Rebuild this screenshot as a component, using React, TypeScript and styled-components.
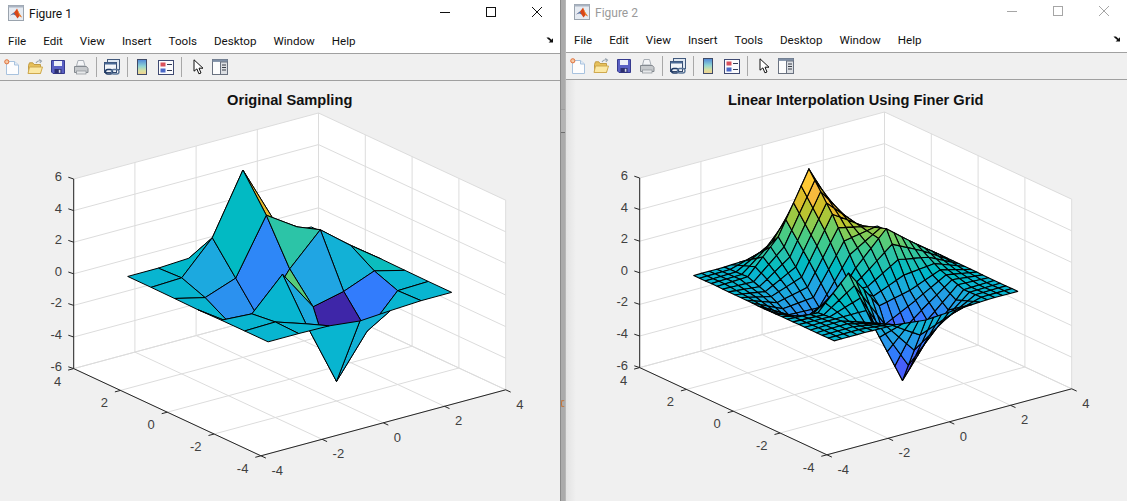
import React from "react";
import styled, { createGlobalStyle } from "styled-components";

const Global = createGlobalStyle`
  html, body { margin: 0; padding: 0; background: #f0f0f0; overflow: hidden; }
  #root { width: 1127px; height: 501px; }
`;

const Page = styled.div`
  display: flex;
  width: 1127px;
  height: 501px;
  overflow: hidden;
  font-family: Roboto, "Noto Sans", sans-serif;
`;

const Window = styled.section<{ $shift?: boolean; $w: number }>`
  display: flex;
  flex-direction: column;
  flex: none;
  width: ${(p) => p.$w}px;
  height: ${(p) => (p.$shift ? 502 : 501)}px;
  margin-top: ${(p) => (p.$shift ? -1 : 0)}px;
  background: #f0f0f0;
`;

const TitleBar = styled.header`
  display: flex;
  align-items: center;
  height: 26px;
  flex: none;
  background: #fff;
  padding-left: 8px;
`;

const TitleText = styled.span<{ $inactive?: boolean }>`
  margin: 1px 0 0 5px;
  font-size: 12px;
  line-height: 26px;
  color: ${(p) => (p.$inactive ? "#9a9a9a" : "#111")};
`;

const Controls = styled.div`
  display: flex;
  margin-left: auto;
  height: 26px;
`;

const Control = styled.span<{ $inactive?: boolean }>`
  display: flex;
  align-items: center;
  justify-content: center;
  width: 46px;
  height: 24px;
  color: ${(p) => (p.$inactive ? "#a6a6a6" : "#111")};
`;

const MenuBar = styled.nav`
  display: flex;
  align-items: center;
  gap: 17px;
  height: 27px;
  flex: none;
  padding: 0 6px 0 8px;
  background: #fff;
  border-bottom: 1px solid #a0a0a0;
  font-size: 11.6px;
  color: #111;
  box-sizing: content-box;
`;

const MenuItem = styled.span`
  line-height: 27px;
  margin-top: 3px;
`;

const DockArrow = styled.span`
  margin-left: auto;
  display: flex;
  margin-top: 1px;
`;

const ToolBar = styled.div`
  display: flex;
  align-items: center;
  height: 26px;
  flex: none;
  background: #f0f0f0;
  border-bottom: 1px solid #a0a0a0;
`;

const ToolButton = styled.span`
  display: flex;
  align-items: center;
  justify-content: center;
  width: 23px;
  height: 26px;
  flex: none;
`;

const ToolSep = styled.span`
  flex: none;
  width: 1px;
  height: 20px;
  margin: 0 3.5px;
  background: #a8a8a8;
`;

const Canvas = styled.main<{ $shadow?: boolean }>`
  position: relative;
  flex: 1;
  min-height: 0;
  overflow: hidden;
  background: #f0f0f0;
  ${(p) =>
    p.$shadow
      ? `&::before { content: ""; position: absolute; left: 0; top: 0; bottom: 0; width: 10px;
         background: linear-gradient(90deg, #e2e2e2, #f0f0f0); }`
      : ""}
`;

const PlotSvg = styled.svg`
  display: block;
  position: relative;
`;

const Gutter = styled.div`
  position: relative;
  flex: none;
  width: 6px;
  height: 501px;
  box-sizing: border-box;
  background: #ababab;
  border-left: 1px solid #8a8a8a;
  border-right: 1px solid #b8b8b8;
`;

const GutterMark = styled.span`
  position: absolute;
  left: 0;
  top: 400px;
  width: 4px;
  height: 7px;
  box-sizing: border-box;
  border: 1px solid #c4753a;
  border-right-color: transparent;
  border-radius: 3px;
`;

const GutterBand = styled.span`
  position: absolute;
  left: 0;
  right: 0;
  top: 109px;
  height: 22px;
  background: #b4b4b4;
  border-bottom: 1px solid #6e6e6e;
  border-top: 1px solid #9c9c9c;
`;

const MENU = ["File", "Edit", "View", "Insert", "Tools", "Desktop", "Window", "Help"];

const PARULA: number[][] = [
  [0.2422, 0.1504, 0.6603], [0.2504, 0.165, 0.7076], [0.2578, 0.1818, 0.7511], [0.2647, 0.1978, 0.7952],
  [0.2706, 0.2147, 0.8364], [0.2751, 0.2342, 0.871], [0.2783, 0.2559, 0.8991], [0.2803, 0.2782, 0.9221],
  [0.2813, 0.3006, 0.9414], [0.281, 0.3228, 0.9579], [0.2795, 0.3447, 0.9717], [0.276, 0.3667, 0.9829],
  [0.2699, 0.3892, 0.9906], [0.2602, 0.4123, 0.9952], [0.244, 0.4358, 0.9988], [0.2206, 0.4603, 0.9973],
  [0.1963, 0.4847, 0.9892], [0.1834, 0.5074, 0.9798], [0.1786, 0.5289, 0.9682], [0.1764, 0.5499, 0.952],
  [0.1687, 0.5703, 0.9359], [0.154, 0.5902, 0.9218], [0.146, 0.6091, 0.9079], [0.138, 0.6276, 0.8973],
  [0.1248, 0.6459, 0.8883], [0.1113, 0.6635, 0.8763], [0.0952, 0.6798, 0.8598], [0.0689, 0.6948, 0.8394],
  [0.0297, 0.7082, 0.8163], [0.0036, 0.7203, 0.7917], [0.0067, 0.7312, 0.766], [0.0433, 0.7411, 0.7394],
  [0.0964, 0.75, 0.712], [0.1408, 0.7584, 0.6842], [0.1717, 0.767, 0.6554], [0.1938, 0.7758, 0.6251],
  [0.2161, 0.7843, 0.5923], [0.247, 0.7918, 0.5567], [0.2906, 0.7973, 0.5188], [0.3406, 0.8008, 0.4789],
  [0.3909, 0.8029, 0.4354], [0.4456, 0.8024, 0.3909], [0.5044, 0.7993, 0.348], [0.5616, 0.7942, 0.3045],
  [0.6174, 0.7876, 0.2612], [0.672, 0.7793, 0.2227], [0.7242, 0.7698, 0.191], [0.7738, 0.7598, 0.1646],
  [0.8203, 0.7498, 0.1535], [0.8634, 0.7406, 0.1596], [0.9035, 0.733, 0.1774], [0.9393, 0.7288, 0.21],
  [0.9728, 0.7298, 0.2394], [0.9956, 0.7434, 0.2371], [0.997, 0.7659, 0.2199], [0.9952, 0.7893, 0.2028],
  [0.9892, 0.8136, 0.1885], [0.9786, 0.8386, 0.1766], [0.9676, 0.8639, 0.1643], [0.961, 0.889, 0.1537],
  [0.9597, 0.9135, 0.1423], [0.9628, 0.9373, 0.1265], [0.9691, 0.9606, 0.1064], [0.9769, 0.9839, 0.0805],
];

const peaks = (x: number, y: number) =>
  3 * (1 - x) ** 2 * Math.exp(-(x ** 2) - (y + 1) ** 2) -
  10 * (x / 5 - x ** 3 - y ** 5) * Math.exp(-(x ** 2) - y ** 2) -
  (1 / 3) * Math.exp(-((x + 1) ** 2) - y ** 2);

const interp = (x: number, y: number) => {
  const x0 = Math.min(Math.floor(x), 2);
  const y0 = Math.min(Math.floor(y), 2);
  const tx = x - x0;
  const ty = y - y0;
  return (
    peaks(x0, y0) * (1 - tx) * (1 - ty) +
    peaks(x0 + 1, y0) * tx * (1 - ty) +
    peaks(x0, y0 + 1) * (1 - tx) * ty +
    peaks(x0 + 1, y0 + 1) * tx * ty
  );
};

let zMin = Infinity;
let zMax = -Infinity;
for (let x = -3; x <= 3; x++)
  for (let y = -3; y <= 3; y++) {
    zMin = Math.min(zMin, peaks(x, y));
    zMax = Math.max(zMax, peaks(x, y));
  }

const colorOf = (z: number) => {
  const i = Math.max(0, Math.min(63, Math.floor(((z - zMin) / (zMax - zMin)) * 64)));
  const [r, g, b] = PARULA[i];
  return `rgb(${Math.round(r * 255)},${Math.round(g * 255)},${Math.round(b * 255)})`;
};

const proj = (x: number, y: number, z: number): [number, number] => [
  289.7 + 30.6 * x - 23.4 * y,
  284.4 - 8.25 * x - 10.9 * y - 15.8 * z,
];
const pt = (p: [number, number]) => `${p[0].toFixed(2)},${p[1].toFixed(2)}`;
const depth = (x: number, y: number, z: number) => (-0.527 * x) / 8 - (0.687 * y) / 8 + (0.5 * z) / 12;

type Face = { d: number; points: string; fill: string };
const buildFaces = (step: number): Face[] => {
  const n = Math.round(6 / step);
  const out: Face[] = [];
  for (let i = 0; i < n; i++)
    for (let j = 0; j < n; j++) {
      const x0 = -3 + i * step;
      const y0 = -3 + j * step;
      const x1 = x0 + step;
      const y1 = y0 + step;
      const corners: [number, number][] = [[x0, y0], [x1, y0], [x1, y1], [x0, y1]];
      const zs = corners.map(([a, b]) => interp(a, b));
      const d = corners.reduce((s, [a, b], k) => s + depth(a, b, zs[k]), 0) / 4;
      out.push({
        d,
        points: corners.map(([a, b], k) => pt(proj(a, b, zs[k]))).join(" "),
        fill: colorOf(zs[0]),
      });
    }
  return out.sort((p, q) => p.d - q.d);
};

const GRID = "#dcdcdc";
const AXIS = "#262626";
const LABEL = "#404040";
const xs = [-4, -2, 0, 2, 4];
const zs = [-6, -4, -2, 0, 2, 4, 6];

const seg = (a: [number, number], b: [number, number], stroke: string, w: number, key: string) => (
  <line key={key} x1={a[0]} y1={a[1]} x2={b[0]} y2={b[1]} stroke={stroke} strokeWidth={w} />
);

const Plot: React.FC<{ title: string; titleY: number; step: number; w: number; edge: number }> = ({
  title,
  titleY,
  step,
  w,
  edge,
}) => {
  const faces = React.useMemo(() => buildFaces(step), [step]);
  const wall = [
    proj(-4, 4, 6), proj(4, 4, 6), proj(4, -4, 6), proj(4, -4, -6), proj(-4, -4, -6), proj(-4, 4, -6),
  ];
  return (
    <PlotSvg width={w} height={421} viewBox={`0 81 ${w} 421`}>
      <polygon points={wall.map(pt).join(" ")} fill="#fff" />
      {xs.map((v) => seg(proj(v, -4, -6), proj(v, 4, -6), GRID, 1, `gx${v}`))}
      {xs.map((v) => seg(proj(-4, v, -6), proj(4, v, -6), GRID, 1, `gy${v}`))}
      {xs.map((v) => seg(proj(v, 4, -6), proj(v, 4, 6), GRID, 1, `wx${v}`))}
      {xs.map((v) => seg(proj(4, v, -6), proj(4, v, 6), GRID, 1, `wy${v}`))}
      {zs.map((v) => seg(proj(-4, 4, v), proj(4, 4, v), GRID, 1, `zx${v}`))}
      {zs.map((v) => seg(proj(4, 4, v), proj(4, -4, v), GRID, 1, `zy${v}`))}
      {faces.map((f, i) => (
        <polygon key={i} points={f.points} fill={f.fill} stroke="#000" strokeWidth={edge} strokeLinejoin="round" />
      ))}
      {seg(proj(-4, 4, -6), proj(-4, 4, 6), AXIS, 1, "az")}
      {seg(proj(-4, 4, -6), proj(-4, -4, -6), AXIS, 1, "ay")}
      {seg(proj(-4, -4, -6), proj(4, -4, -6), AXIS, 1, "ax")}
      {zs.map((v) => {
        const p = proj(-4, 4, v);
        return (
          <g key={`tz${v}`}>
            {seg(p, [p[0] - 5.4, p[1] - 1.8], AXIS, 1, "t")}
            <text x={62} y={p[1] + 2} textAnchor="end" fontFamily="'Liberation Sans', sans-serif" fontSize={13} fill={LABEL}>
              {v}
            </text>
          </g>
        );
      })}
      {xs.map((v) => {
        const p = proj(-4, v, -6);
        return (
          <g key={`ty${v}`}>
            {seg(p, [p[0] - 5.6, p[1] + 1.5], AXIS, 1, "t")}
            <text x={p[0] - 12.5} y={p[1] + 17} textAnchor="end" fontFamily="'Liberation Sans', sans-serif" fontSize={13} fill={LABEL}>
              {v}
            </text>
          </g>
        );
      })}
      {xs.map((v) => {
        const p = proj(v, -4, -6);
        return (
          <g key={`tx${v}`}>
            {seg(p, [p[0] + 5, p[1] + 2.3], AXIS, 1, "t")}
            <text x={p[0] + 10.5} y={p[1] + 18.7} fontFamily="'Liberation Sans', sans-serif" fontSize={13} fill={LABEL}>
              {v}
            </text>
          </g>
        );
      })}
      <text x={289.7} y={titleY} textAnchor="middle" fontFamily="'Liberation Sans', sans-serif" fontWeight="700" fontSize={14.65} fill="#111">
        {title}
      </text>
    </PlotSvg>
  );
};

const MatlabLogo = () => (
  <svg width="16" height="16" viewBox="0 0 16 16">
    <rect x="0.5" y="0.5" width="15" height="15" fill="#e6ebf2" stroke="#9aa3ad" />
    <rect x="0.5" y="0.5" width="15" height="2" fill="#a9b4c2" />
    <path d="M2 10.5 L6 7.5 L8 5 L9 3.5 L11 8 L14 12.5 L11.5 11 L9.5 13.5 L7.5 10.5 L5 9 Z" fill="#d8461a" />
    <path d="M2 10.5 L6 7.5 L7.5 10.5 L5.5 9.2 Z" fill="#3f7fc0" />
    <path d="M9 3.5 L11 8 L14 12.5 L11.5 11 L10 7 Z" fill="#f0912c" />
  </svg>
);

const Minimize = () => (
  <svg width="10" height="10" viewBox="0 0 10 10"><path d="M0 5.5H10" stroke="currentColor" /></svg>
);
const Maximize = () => (
  <svg width="10" height="10" viewBox="0 0 10 10"><rect x="0.5" y="0.5" width="9" height="9" fill="none" stroke="currentColor" /></svg>
);
const Close = () => (
  <svg width="10" height="10" viewBox="0 0 10 10"><path d="M0 0L10 10M10 0L0 10" stroke="currentColor" strokeWidth="1" /></svg>
);
const Arrow = () => (
  <svg width="8" height="6" viewBox="0 0 8 6"><path d="M0.5 0.5L3 0.5L5.5 2.7L7 1.2V5.5H2.6L4.2 4L1.6 1.8Z" fill="#111" /></svg>
);

const NewIcon = () => (
  <svg width="16" height="17" viewBox="0 0 16 17">
    <path d="M2.5 2.5H10.5L14.5 6V15.5H2.5Z" fill="#fdfdfe" stroke="#a8c2de" />
    <path d="M10.5 2.5V6H14.5" fill="#e2ecf6" stroke="#a8c2de" />
    <circle cx="2.8" cy="2.8" r="2.1" fill="#f6c9a4" stroke="#e0703a" strokeWidth="1" />
  </svg>
);
const OpenIcon = () => (
  <svg width="16" height="16" viewBox="0 0 16 16">
    <path d="M1.5 6.5V14.5H13.5V5.5H7L5.8 3.8H2.5Z" fill="#e6c05a" stroke="#c29c44" />
    <path d="M1 14.5L2.5 8H15.5L13.5 14.5Z" fill="#fbe8a4" stroke="#cfa94f" />
    <path d="M9 4C10 2 11.5 1.5 13.5 1.8M12.3 0.5L14.5 2L12.8 4" fill="none" stroke="#96a2ae" strokeWidth="1.1" />
  </svg>
);
const SaveIcon = () => (
  <svg width="16" height="16" viewBox="0 0 16 16">
    <path d="M1.5 1.5H14.5V14.5H3L1.5 13Z" fill="#5a60c4" stroke="#363a8e" />
    <rect x="4" y="2" width="8" height="5" fill="#eef0f8" />
    <rect x="4.5" y="10" width="7" height="4.5" fill="#2c2f70" />
    <rect x="8.8" y="10.8" width="1.6" height="3" fill="#d8dbe8" />
  </svg>
);
const PrintIcon = () => (
  <svg width="16" height="16" viewBox="0 0 16 16">
    <path d="M3.5 7L5 1.5H10.5L12 7Z" fill="#f4f5f7" stroke="#a8aeb5" />
    <path d="M1.5 7.5H13.5L15 9.5V13.5H1.5Z" fill="#c6c9cc" stroke="#858a90" />
    <rect x="3.5" y="12" width="9.5" height="3" fill="#e6e8ea" stroke="#8b9096" strokeWidth="0.7" />
  </svg>
);
const LinkIcon = () => (
  <svg width="16" height="17" viewBox="0 0 16 17">
    <rect x="3.5" y="0.5" width="12" height="10" fill="#dfe8f2" stroke="#42597c" />
    <rect x="0.5" y="3.5" width="12" height="10" fill="#f2f5f9" stroke="#34496d" />
    <rect x="0.5" y="3.5" width="12" height="2" fill="#4a6a96" />
    <rect x="1.5" y="10.5" width="7" height="4.5" rx="2.2" fill="none" stroke="#1f3a66" strokeWidth="1.4" />
    <rect x="7.5" y="10.5" width="7.5" height="4.5" rx="2.2" fill="none" stroke="#5a7598" strokeWidth="1.4" />
  </svg>
);
const ColorbarIcon = () => (
  <svg width="10" height="16" viewBox="0 0 10 16" style={{ marginRight: 1 }}>
    <defs>
      <linearGradient id="cbGrad" x1="0" y1="0" x2="0" y2="1">
        <stop offset="0" stopColor="#4f86d8" />
        <stop offset="0.45" stopColor="#8fd4d4" />
        <stop offset="0.75" stopColor="#d8e0a0" />
        <stop offset="1" stopColor="#f4d090" />
      </linearGradient>
    </defs>
    <rect x="0.5" y="0.5" width="9" height="15" fill="url(#cbGrad)" stroke="#3f4a66" />
  </svg>
);
const LegendIcon = () => (
  <svg width="16" height="15" viewBox="0 0 16 15">
    <rect x="0.5" y="0.5" width="15" height="14" fill="#fbfbfd" stroke="#3f4a72" />
    <rect x="2.5" y="2.5" width="5" height="4" fill="#d9505a" />
    <rect x="2.5" y="8.5" width="5" height="4" fill="#4a68c8" />
    <path d="M9 4.5H14M9 10.5H14" stroke="#333c55" strokeWidth="1.2" />
  </svg>
);
const CursorIcon = () => (
  <svg width="12" height="16" viewBox="0 0 12 16" style={{ marginLeft: 5 }}>
    <path d="M1 0.8V12.2L3.9 9.9L5.9 14.8L8 14L6 9.2H10Z" fill="#fff" stroke="#111" />
  </svg>
);
const PlotToolsIcon = () => (
  <svg width="16" height="16" viewBox="0 0 16 16">
    <rect x="0.5" y="0.5" width="15" height="15" fill="#fdfdfd" stroke="#6a7280" />
    <rect x="0.5" y="0.5" width="15" height="2.4" fill="#7f8fa6" />
    <rect x="8.5" y="3" width="7" height="12.5" fill="#dcdfe3" stroke="#6a7280" />
    <path d="M10 6H14M10 8.5H14M10 11H14" stroke="#3a3f48" />
  </svg>
);

const Figure: React.FC<{
  name: string;
  title: string;
  titleY: number;
  step: number;
  w: number;
  edge: number;
  second?: boolean;
}> = ({ name, title, titleY, step, w, edge, second }) => (
  <Window $w={w} $shift={second}>
    <TitleBar>
      <MatlabLogo />
      <TitleText $inactive={second}>{name}</TitleText>
      <Controls>
        <Control $inactive={second}><Minimize /></Control>
        <Control $inactive={second}><Maximize /></Control>
        <Control $inactive={second}><Close /></Control>
      </Controls>
    </TitleBar>
    <MenuBar>
      {MENU.map((m) => (
        <MenuItem key={m}>{m}</MenuItem>
      ))}
      <DockArrow><Arrow /></DockArrow>
    </MenuBar>
    <ToolBar>
      <ToolButton><NewIcon /></ToolButton>
      <ToolButton><OpenIcon /></ToolButton>
      <ToolButton><SaveIcon /></ToolButton>
      <ToolButton><PrintIcon /></ToolButton>
      <ToolSep />
      <ToolButton><LinkIcon /></ToolButton>
      <ToolSep />
      <ToolButton><ColorbarIcon /></ToolButton>
      <ToolButton><LegendIcon /></ToolButton>
      <ToolSep />
      <ToolButton><CursorIcon /></ToolButton>
      <ToolButton><PlotToolsIcon /></ToolButton>
    </ToolBar>
    <Canvas $shadow={second}>
      <Plot title={title} titleY={titleY} step={step} w={w} edge={edge} />
    </Canvas>
  </Window>
);

export default function App() {
  return (
    <Page>
      <Global />
      <Figure name="Figure 1" title="Original Sampling" titleY={105} step={1} w={560} edge={1} />
      <Gutter>
        <GutterBand />
        <GutterMark />
      </Gutter>
      <Figure
        name="Figure 2"
        title="Linear Interpolation Using Finer Grid"
        titleY={106}
        step={0.25}
        w={561}
        edge={1.1}
        second
      />
    </Page>
  );
}
